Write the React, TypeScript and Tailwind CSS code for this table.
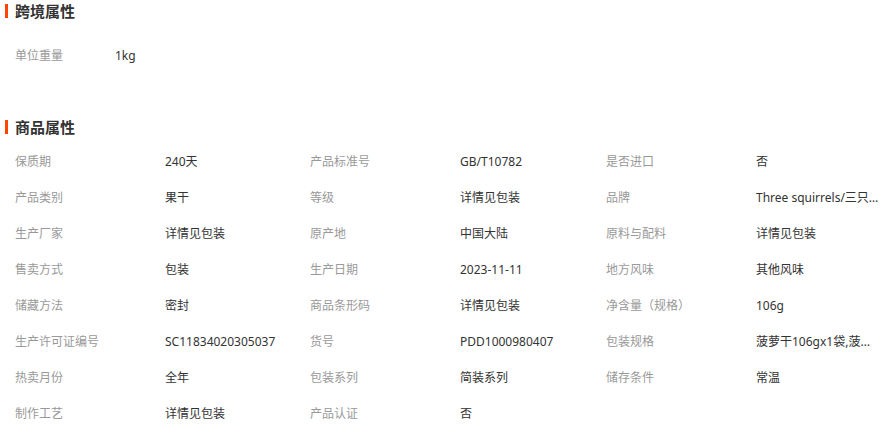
import React from "react";

const rows: [string, string][][] = [
  [["保质期", "240天"], ["产品标准号", "GB/T10782"], ["是否进口", "否"]],
  [["产品类别", "果干"], ["等级", "详情见包装"], ["品牌", "Three squirrels/三只松鼠"]],
  [["生产厂家", "详情见包装"], ["原产地", "中国大陆"], ["原料与配料", "详情见包装"]],
  [["售卖方式", "包装"], ["生产日期", "2023-11-11"], ["地方风味", "其他风味"]],
  [["储藏方法", "密封"], ["商品条形码", "详情见包装"], ["净含量（规格）", "106g"]],
  [["生产许可证编号", "SC11834020305037"], ["货号", "PDD1000980407"], ["包装规格", "菠萝干106gx1袋,菠萝干106gx2袋"]],
  [["热卖月份", "全年"], ["包装系列", "简装系列"], ["储存条件", "常温"]],
  [["制作工艺", "详情见包装"], ["产品认证", "否"]],
];

const widths = [
  ["w-[150px]", "w-[145px]"],
  ["w-[150px]", "w-[146px]"],
  ["w-[150px]", "w-[123px]"],
];

const Title = ({ text }: { text: string }) => (
  <div className="flex items-center h-[24px]">
    <span className="ml-[5px] w-[3px] h-[14px] bg-[#ff4400]" />
    <span className="ml-[7px] text-[15px] font-bold text-[#333]">{text}</span>
  </div>
);

export default function App() {
  return (
    <div
      className="w-[886px] h-[433px] bg-white overflow-hidden text-[12px]"
      style={{ fontFamily: '"Noto Sans", "Noto Sans CJK SC", sans-serif' }}
    >
      <div className="-mt-[1px]">
        <Title text="跨境属性" />
      </div>
      <div className="flex items-center h-[36px] mt-[15px] pl-[15px]">
        <span className="w-[100px] text-[#999]">单位重量</span>
        <span className="text-[#333]">1kg</span>
      </div>

      <div className="mt-[41px]">
        <Title text="商品属性" />
      </div>
      <div className="mt-[5px]">
        {rows.map((row, i) => (
          <div key={i} className="flex items-center h-[36px] pl-[15px]">
            {row.map(([label, value], j) => (
              <React.Fragment key={j}>
                <span className={`${widths[j][0]} shrink-0 text-[#999] whitespace-nowrap`}>{label}</span>
                <span
                  className={`${widths[j][1]} shrink-0 text-[#333] whitespace-nowrap overflow-hidden text-ellipsis`}
                >
                  {value}
                </span>
              </React.Fragment>
            ))}
          </div>
        ))}
      </div>
    </div>
  );
}
